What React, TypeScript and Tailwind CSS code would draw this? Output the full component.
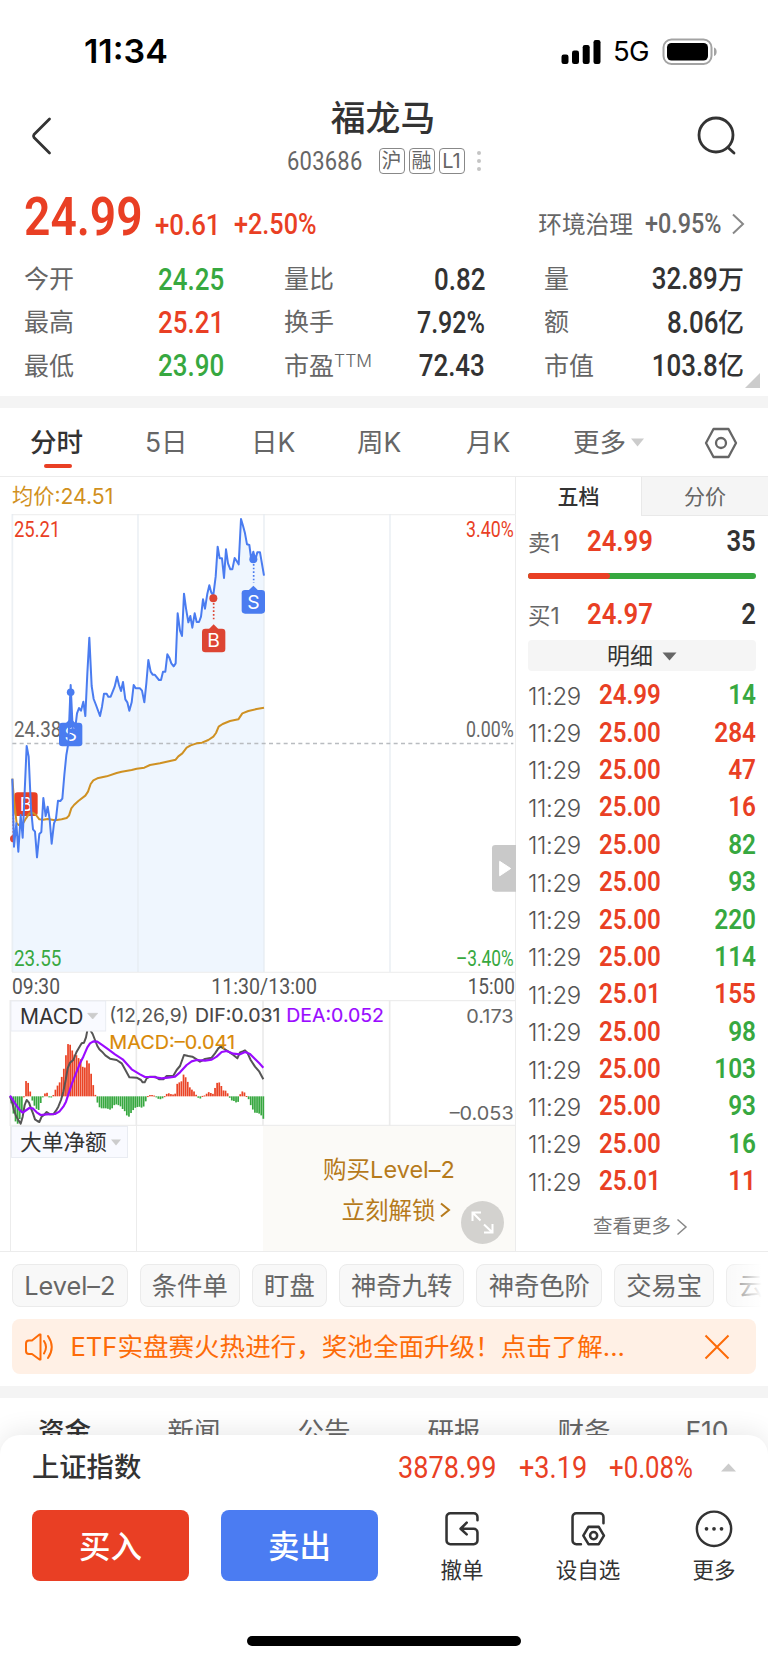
import React from "react";

const SANS = "font-['Inter','Noto_Sans_CJK_SC',sans-serif]";
const RED = "text-[#e93f24]";
const GREEN = "text-[#37a840]";

/** Condensed tabular figures used for every quote value. */
function Num({ children, className = "scale-x-[.86]", right = false }: { children: React.ReactNode; className?: string; right?: boolean }) {
  return (
    <span
      className={`inline-block whitespace-nowrap leading-none font-['Roboto','Noto_Sans_CJK_SC',sans-serif] ${
        right ? "origin-right" : "origin-left"
      } ${className}`}
    >
      {children}
    </span>
  );
}

const PRICE =
  "37,896 42,1100 49,1030 55,1115 62,1005 68,1073 80,798 86,830 93,985 99,1048 105,1055 111,1132 118,1062 124,1056 130,954 137,1008 143,980 149,1018 155,1091 162,1030 168,1015 174,962 181,963 187,956 193,885 199,825 205,790 212,615 218,745 224,760 231,700 237,684 243,692 250,665 256,708 262,580 268,473 275,618 281,657 288,675 300,708 306,680 312,641 320,641 325,650 332,650 344,620 351,590 357,615 363,633 369,606 376,658 382,667 388,692 395,667 401,615 407,625 420,625 426,632 433,667 439,610 445,540 452,575 458,584 464,584 477,600 483,600 489,575 496,575 502,523 508,533 514,550 521,559 527,550 533,400 540,452 546,468 552,341 558,385 565,427 571,408 577,443 584,400 590,426 597,426 603,410 609,358 615,386 622,341 628,316 634,338 640,345 647,290 653,200 659,235 666,235 672,294 678,208 684,250 691,268 697,268 704,234 710,243 716,253 723,117 729,137 735,160 741,193 748,195 754,240 760,215 766,240 772,217 780,217 792,287";
const AVERAGE =
  "37,896 42,960 50,1030 56,1035 68,1032 78,1015 88,1000 98,998 108,1005 118,1018 130,1019 143,1017 165,1021 185,1018 200,1014 207,1007 214,985 222,975 235,963 256,947 264,935 272,912 280,901 292,895 320,889 350,879 365,875 395,870 410,866 433,863 450,855 480,850 500,845 527,839 535,829 547,820 560,803 572,796 590,790 606,788 625,780 640,770 648,759 656,740 668,732 690,723 715,718 727,700 745,693 770,687 792,683";
const DIF =
  "30,409 36,425 42,450 48,468 55,480 62,491 68,470 74,435 80,420 87,428 93,445 99,460 105,478 112,483 118,486 125,470 132,465 140,456 150,463 160,463 168,452 175,440 183,420 190,395 197,360 203,325 210,308 220,300 230,275 240,258 245,250 252,248 258,232 263,206 270,209 278,222 285,240 292,258 298,268 306,275 316,286 330,296 350,300 365,310 375,328 388,352 410,353 423,360 428,367 434,367 440,355 450,350 465,350 478,358 490,358 500,348 520,347 530,330 540,318 552,285 565,288 577,290 590,298 600,305 615,297 635,293 645,280 655,265 662,260 675,268 690,278 700,285 712,295 720,277 728,274 735,271 742,278 752,300 765,320 778,335 790,358";
const DEA =
  "30,407 45,430 58,449 68,458 75,453 88,444 98,445 110,457 122,465 140,463 165,462 178,455 190,440 198,425 206,400 216,370 228,340 240,310 250,290 262,262 270,250 280,244 292,245 305,254 325,268 345,283 368,298 395,328 420,343 435,351 460,351 485,355 510,352 525,350 540,337 560,315 575,304 590,300 615,302 635,299 650,290 665,276 680,273 700,281 720,283 735,276 750,282 765,297 778,310 790,323";
const HIST: [number, number][] = [
  [34, 430], [38, 452], [50, 497], [56, 485], [62, 470], [68, 450], [74, 385], [80, 353], [87, 378], [93, 405], [99, 430], [105, 440], [112, 450], [118, 450], [124, 420], [130, 408], [137, 397], [143, 399], [149, 414], [155, 412], [162, 402], [168, 384], [175, 373], [181, 364], [187, 345], [193, 320], [200, 270], [206, 244], [212, 258], [219, 278], [225, 287], [231, 285], [237, 297], [244, 298], [250, 330], [256, 320], [263, 293], [269, 318], [276, 355], [282, 388], [288, 413], [295, 437], [301, 445], [320, 445], [333, 450], [345, 432], [357, 436], [363, 440], [370, 450], [376, 455], [382, 470], [388, 470], [395, 455], [407, 442], [420, 440], [428, 445], [436, 430], [440, 410], [450, 405], [460, 405], [470, 412], [478, 419], [490, 414], [497, 404], [504, 399], [515, 403], [525, 404], [529, 375], [536, 366], [543, 370], [549, 342], [556, 350], [562, 362], [568, 380], [574, 388], [580, 391], [587, 402], [593, 412], [600, 417], [606, 408], [615, 406], [625, 396], [640, 402], [649, 370], [656, 366], [662, 371], [668, 392], [675, 390], [683, 400], [690, 415], [697, 423], [705, 423], [713, 434], [717, 410], [725, 394], [732, 395], [738, 406], [745, 415], [752, 435], [763, 458], [775, 459], [783, 465], [791, 478],
];

function histAt(x: number) {
  for (let i = 1; i < HIST.length; i++) {
    if (x <= HIST[i][0]) {
      const [x0, y0] = HIST[i - 1];
      const [x1, y1] = HIST[i];
      return y0 + ((y1 - y0) * (x - x0)) / (x1 - x0);
    }
  }
  return HIST[HIST.length - 1][1];
}

function AxisText({ x, y, w, fill, children, end = false }: { x: number; y: number; w: number; fill: string; children: string; end?: boolean }) {
  return (
    <text x={x} y={y} textLength={w} lengthAdjust="spacingAndGlyphs" textAnchor={end ? "end" : "start"} fill={fill} fontSize="65" fontFamily="Roboto, sans-serif">
      {children}
    </text>
  );
}

function Flag({ x, y, letter, fill, pointer = true }: { x: number; y: number; letter: string; fill: string; pointer?: boolean }) {
  return (
    <g>
      {pointer && <path d={`M${x - 14} ${y + 1} L${x} ${y - 13} L${x + 14} ${y + 1}Z`} fill={fill} />}
      <rect x={x - 35} y={y} width="70" height="71" rx="10" fill={fill} />
      <text x={x} y={y + 56} textAnchor="middle" fill="#fff" fontSize="58" fontFamily="Inter, sans-serif">
        {letter}
      </text>
    </g>
  );
}

function PriceChart() {
  return (
    <svg className="block h-[486px] w-[516px]" viewBox="0 102 1548 1458">
      <polygon points={`37,1476 ${PRICE} 792,1476`} fill="#eff6fe" />
      <path d="M36 103.5H1548M36 1477H1548" stroke="#f0f0f0" strokeWidth="4" />
      <path d="M37 102V1476M414 102V1476M792 102V1476M1170 102V1476" stroke="#e6ebf0" strokeOpacity=".75" strokeWidth="5" />
      <path d="M37 790.5H1540" stroke="#b9bcc0" strokeWidth="4" strokeDasharray="12 10" />
      <AxisText x={42} y={172} w={139} fill="#e93f24">25.21</AxisText>
      <AxisText x={42} y={772} w={142} fill="#666">24.38</AxisText>
      <AxisText x={42} y={1458} w={142} fill="#37a840">23.55</AxisText>
      <AxisText x={1541} y={172} w={143} fill="#e93f24" end>3.40%</AxisText>
      <AxisText x={1541} y={772} w={143} fill="#666" end>0.00%</AxisText>
      <AxisText x={1541} y={1458} w={173} fill="#37a840" end>–3.40%</AxisText>
      <AxisText x={36} y={1543} w={144} fill="#555">09:30</AxisText>
      <AxisText x={634} y={1543} w={317} fill="#555">11:30/13:00</AxisText>
      <AxisText x={1545} y={1543} w={142} fill="#555" end>15:00</AxisText>
      <Flag x={78} y={937} letter="B" fill="#e93f24" pointer={false} />
      <Flag x={212} y={728} letter="S" fill="#4a7cf0" />
      <path d="M40 1003V1072" stroke="#dd4533" strokeWidth="5" strokeDasharray="5 5" />
      <path d="M41 1065a11 11 0 1 0 0 22Z" fill="#dd4533" />
      <polyline points={AVERAGE} fill="none" stroke="#cf9123" strokeWidth="6" strokeLinejoin="round" />
      <polyline points={PRICE} fill="none" stroke="#4a7cf0" strokeWidth="6" strokeLinejoin="round" />
      <circle cx="212" cy="637" r="11.5" fill="#4a7cf0" />
      <path d="M212 650V735" stroke="#4a7cf0" strokeWidth="8" />
      <path d="M212 740V792" stroke="#4a7cf0" strokeWidth="5" strokeDasharray="5 6" />
      <circle cx="640" cy="355" r="12" fill="#dd4533" />
      <path d="M641 369V424" stroke="#dd4533" strokeWidth="5" strokeDasharray="5 6" />
      <Flag x={641} y={446} letter="B" fill="#dd4533" />
      <circle cx="760" cy="238" r="12" fill="#4a7cf0" />
      <path d="M761 252V308" stroke="#4a7cf0" strokeWidth="5" strokeDasharray="5 6" />
      <Flag x={760} y={330} letter="S" fill="#4a7cf0" />
      <path d="M1548 1095h-62a10 10 0 0 0-10 10v120a10 10 0 0 0 10 10h62Z" fill="#c9c9c9" />
      <path d="M1499 1144l33 21.500-33 22Z" fill="#fff" stroke="#fff" strokeWidth="3" strokeLinejoin="round" />
    </svg>
  );
}

function MacdChart() {
  const bars = Array.from({ length: 121 }, (_, i) => 34 + i * 6.3);
  return (
    <svg className="block h-[126px] w-[516px]" viewBox="0 120 1548 378">
      <path d="M30 122H1548M30 496H1548" stroke="#ededed" strokeWidth="4" />
      <path d="M31 120V498M409 120V498M789 120V498M1169 120V498" stroke="#ebebeb" strokeWidth="5" />
      {bars.map((x) => {
        const y = histAt(x);
        const up = y < 409;
        return <rect key={x} x={x - 2.6} y={up ? y : 409} width="5.2" height={Math.max(3, Math.abs(y - 409))} fill={up ? "#ea4426" : "#37a840"} />;
      })}
      <polyline points={DIF} fill="none" stroke="#555" strokeWidth="6" strokeLinejoin="round" />
      <polyline points={DEA} fill="none" stroke="#9a0bff" strokeWidth="6.500" strokeLinejoin="round" />
      <g fontFamily="Inter, sans-serif" fontSize="58">
        <rect x="33" y="123" width="284" height="90" fill="#f9faff" stroke="#e9ecf2" strokeWidth="3" />
        <text x="60" y="192" fontSize="64" textLength="190" lengthAdjust="spacingAndGlyphs" fill="#333">MACD</text>
        <path d="M263 160h30l-15 17Z" fill="#ccc" stroke="#ccc" strokeWidth="2" />
        <text x="328" y="185" textLength="238" lengthAdjust="spacingAndGlyphs" fill="#555">(12,26,9)</text>
        <text x="585" y="185" textLength="256" lengthAdjust="spacingAndGlyphs" fill="#444" stroke="#444" strokeWidth=".5">DIF:0.031</text>
        <text x="859" y="185" textLength="293" lengthAdjust="spacingAndGlyphs" fill="#9a0bff" stroke="#9a0bff" strokeWidth=".5">DEA:0.052</text>
        <text x="328" y="267" textLength="377" lengthAdjust="spacingAndGlyphs" fill="#d98a08" stroke="#d98a08" strokeWidth=".5">MACD:–0.041</text>
        <text x="1541" y="189" textAnchor="end" textLength="142" lengthAdjust="spacingAndGlyphs" fill="#666">0.173</text>
        <text x="1541" y="479" textAnchor="end" textLength="192" lengthAdjust="spacingAndGlyphs" fill="#666">–0.053</text>
      </g>
    </svg>
  );
}

const STATS = [
  ["今开", "24.25", GREEN, "量比", "0.82", "量", "32.89万"],
  ["最高", "25.21", RED, "换手", "7.92%", "额", "8.06亿"],
  ["最低", "23.90", GREEN, "市盈", "72.43", "市值", "103.8亿"],
];

const TICKS: [string, string, string][] = [
  ["24.99", "14", GREEN],
  ["25.00", "284", RED],
  ["25.00", "47", RED],
  ["25.00", "16", RED],
  ["25.00", "82", GREEN],
  ["25.00", "93", GREEN],
  ["25.00", "220", GREEN],
  ["25.00", "114", GREEN],
  ["25.01", "155", RED],
  ["25.00", "98", GREEN],
  ["25.00", "103", GREEN],
  ["25.00", "93", GREEN],
  ["25.00", "16", GREEN],
  ["25.01", "11", RED],
];

function StatusBar() {
  return (
    <div className="flex h-[90px] shrink-0 items-center pt-[13px] pr-[51px] pl-[84px] text-black">
      <span className="origin-left scale-x-[1.03] text-[33px] leading-none font-semibold">11:34</span>
      <div className="ml-auto flex items-center">
        <svg width="40" height="26" viewBox="0 0 40 26">
          <rect x="0.500" y="15.500" width="7" height="9.500" rx="2.200" />
          <rect x="11" y="11.500" width="7" height="13.500" rx="2.200" />
          <rect x="21.700" y="6" width="7" height="19" rx="2.200" />
          <rect x="32.500" y="1" width="7" height="24" rx="2.200" />
        </svg>
        <span className="ml-[12px] w-[37px] origin-left pt-px text-[27.5px] leading-none tracking-[-.6px]">5G</span>
        <svg className="ml-[12px]" width="55" height="28" viewBox="0 0 55 28">
          <rect x="1.500" y="1.500" width="48" height="24.500" rx="8" fill="none" stroke="#a3a3a3" strokeWidth="2" />
          <rect x="5" y="5" width="41" height="17.500" rx="4.500" />
          <path d="M52 9.500c3.500 1 3.500 7.500 0 8.500Z" fill="#a3a3a3" />
        </svg>
      </div>
    </div>
  );
}

function Header() {
  return (
    <div className="grid h-[94px] shrink-0 grid-cols-[1fr_auto_1fr] items-start pr-[31px] pl-[30px]">
      <svg className="mt-[26px]" width="24" height="40" viewBox="0 0 24 40" fill="none" stroke="#333" strokeWidth="2.800" strokeLinecap="round" strokeLinejoin="round">
        <path d="M19.500 3L4 18.500Q3 20 4 21.500L19.500 37" />
      </svg>
      <div className="flex flex-col items-center">
        <div className="mt-[11px] mr-px text-[34.8px] leading-[34px] font-medium text-[#333]">福龙马</div>
        <div className="mt-[13px] flex h-[26px] items-center">
          <span className="w-[92px] text-[25.5px] leading-none text-[#666]"><Num className="scale-x-[.86] pt-px font-[450] tracking-[.3px]">603686</Num></span>
          <div className="flex gap-1 text-[#666]">
            {["沪", "融", "L1"].map((t) => (
              <span key={t} className="flex size-[26px] items-center justify-center rounded-[4px] border-[1.500px] border-[#888] text-[20px] leading-none">{t}</span>
            ))}
          </div>
          <span className="ml-[12px] flex flex-col gap-[4px]">
            <i className="size-1 rounded-full bg-[#c4c4c4]" />
            <i className="size-1 rounded-full bg-[#c4c4c4]" />
            <i className="size-1 rounded-full bg-[#c4c4c4]" />
          </span>
        </div>
      </div>
      <svg className="mt-[25px] justify-self-end" width="40" height="42" viewBox="0 0 40 42" fill="none" stroke="#333" strokeWidth="2.800" strokeLinecap="round">
        <circle cx="19" cy="20" r="17" />
        <path d="M31 32.500L37 38" />
      </svg>
    </div>
  );
}

function Quote() {
  return (
    <div className="relative h-[212px] shrink-0 text-[#333]">
      <div className="flex h-[64px] items-center pt-px">
        <span className="ml-[24px] w-[131px] text-[54px] leading-none"><Num className={`scale-x-[.855] font-semibold ${RED}`}>24.99</Num></span>
        <div className={`flex w-full items-center pt-[15px] text-[30px] leading-none ${RED}`}>
          <span className="w-[79px]"><Num className="scale-x-[.86] font-medium">+0.61</Num></span>
          <Num className="scale-x-[.84] font-medium">+2.50%</Num>
          <span className="ml-auto pt-px text-[23.7px] text-[#666]">环境治理</span>
          <span className="ml-[12px] w-[80px] text-[28.5px] text-[#666]"><Num className="scale-x-[.82] font-medium">+0.95%</Num></span>
          <svg className="mr-[23px] ml-[6px] shrink-0" width="14" height="22" viewBox="0 0 14 22" fill="none" stroke="#888" strokeWidth="2"><path d="M2 1.500L12 11 2 20.500" /></svg>
        </div>
      </div>
      <div className="mt-[10px]">
        {STATS.map(([a, av, c, b, bv, d, dv]) => (
          <div key={a} className="flex h-[43.3px] items-center text-[30.5px] leading-none font-medium">
            <span className="ml-[24px] w-[134px] text-[25px] font-normal text-[#666]">{a}</span>
            <span className={`w-[126px] ${c}`}><Num className="scale-x-[.85]">{av}</Num></span>
            <span className="w-[100px] text-[25px] font-normal whitespace-nowrap text-[#666]">
              {b}
              {b === "市盈" && <sup className="relative -top-[8px] align-baseline text-[17.5px] font-light">TTM</sup>}
            </span>
            <span className="w-[101px] text-right"><Num right className={bv.endsWith("%") ? "scale-x-[.82]" : "scale-x-[.85]"}>{bv}</Num></span>
            <span className="ml-[59px] w-[80px] text-[25px] font-normal text-[#666]">{d}</span>
            <span className="flex w-[120px] items-center justify-end whitespace-nowrap">
              <Num right className="scale-x-[.85]">{dv.slice(0, -1)}</Num>
              <span className="text-[26px] leading-none">{dv.slice(-1)}</span>
            </span>
          </div>
        ))}
      </div>
      <svg className="absolute right-[8px] bottom-[8px]" width="15" height="15"><path d="M15 0V15H0Z" fill="#ccc" /></svg>
    </div>
  );
}

function PeriodTabs() {
  return (
    <div className="flex h-[69px] shrink-0 items-center border-b border-[#ececec] pt-px pl-[30px] text-[26.5px] leading-none text-[#666]">
      <span className="relative w-[115px] font-medium text-[#333]">
        分时
        <i className="absolute top-[35px] left-[14px] h-[4px] w-[28px] rounded-full bg-[#e93f24]" />
      </span>
      <span className="w-[106px]">5日</span>
      <span className="w-[106px]">日K</span>
      <span className="w-[109px]">周K</span>
      <span className="w-[107px]">月K</span>
      <span>更多</span>
      <svg className="ml-[4px]" width="15" height="9"><path d="M1 .5h13L7.500 8.500Z" fill="#ccc" /></svg>
      <svg className="ml-[59px]" width="34" height="32" viewBox="0 0 34 32" fill="none" stroke="#666" strokeWidth="2.300" strokeLinejoin="round">
        <path d="M9.500 2h15L32 16l-7.500 14h-15L2 16Z" />
        <circle cx="17" cy="16" r="5" />
      </svg>
    </div>
  );
}

function OrderBook() {
  return (
    <div className="flex w-[252px] flex-col">
      <div className="flex h-[39px] text-[21px] leading-none">
        <div className="flex w-[125px] items-center justify-center font-medium text-[#333]">五档</div>
        <div className="flex w-[127px] items-center justify-center border-b border-l border-[#e9e9e9] bg-[#f5f5f5] text-[#666]">分价</div>
      </div>
      <div className="flex flex-col px-[12px]">
        <div className="flex h-[50px] items-center pt-[2px] text-[29.5px] leading-none font-semibold">
          <span className="w-[59px] pt-[3px] text-[22.5px] font-normal text-[#666]">卖1</span>
          <Num className={`scale-x-[.87] ${RED}`}>24.99</Num>
          <Num right className="ml-auto scale-x-[.87] text-[#333]">35</Num>
        </div>
        <div className="mt-[7px] flex h-[6px] overflow-hidden rounded-full bg-[#37a840]"><i className="w-[82px] rounded-r-full bg-[#e93f24]" /></div>
        <div className="mt-[9px] flex h-[52px] items-center pt-[2px] text-[29.5px] leading-none font-semibold">
          <span className="w-[59px] pt-[3px] text-[22.5px] font-normal text-[#666]">买1</span>
          <Num className={`scale-x-[.87] ${RED}`}>24.97</Num>
          <Num right className="ml-auto scale-x-[.87] text-[#333]">2</Num>
        </div>
        <div className="flex h-[31px] items-center justify-center rounded-[4px] bg-[#f5f5f5] pt-px text-[23px] leading-none text-[#333]">
          明细
          <svg className="ml-[9px]" width="15" height="9"><path d="M.5.5h14L7.500 8.500Z" fill="#666" /></svg>
        </div>
        <div className="mt-[5.5px] flex flex-col">
          {TICKS.map(([price, vol, color], i) => (
            <div key={i} className="flex h-[37.4px] items-center text-[28px] leading-none">
              <span className="w-[71px] pt-[3px] text-[24px] font-light tracking-[-.4px] text-[#555]">11:29</span>
              <Num className={`scale-x-[.86] font-semibold ${RED}`}>{price}</Num>
              <Num right className={`ml-auto scale-x-[.87] font-semibold ${color}`}>{vol}</Num>
            </div>
          ))}
        </div>
        <div className="mt-[15px] flex h-[24px] items-center justify-center pr-[3px] text-[19.5px] leading-none text-[#777]">
          查看更多
          <svg className="ml-[5px]" width="12" height="18" fill="none" stroke="#888" strokeWidth="1.500"><path d="M1.500 1.500L10 9 1.500 16.500" /></svg>
        </div>
      </div>
    </div>
  );
}

function Charts() {
  return (
    <div className="flex h-[775px] shrink-0 border-b border-[#ececec]">
      <div className="flex w-[516px] flex-col border-r border-[#ececec]">
        <div className="flex h-[37px] items-center pt-[2px] pl-[12px] text-[21.2px] leading-none text-[#d1901d]">均价:24.51</div>
        <PriceChart />
        <MacdChart />
        <div className="ml-[10px] flex h-[125px] border-l border-[#ececec]">
          <div className="w-[126px] border-r border-[#ececec]">
            <div className="flex h-[32px] w-[117px] items-center border border-[#e9ecf2] bg-[#f9faff] pt-px pl-[8px] text-[21.7px] leading-none whitespace-nowrap text-[#333]">
              大单净额
              <svg className="ml-[4px] shrink-0" width="10" height="7"><path d="M0 .5h10L5 6.500Z" fill="#ccc" /></svg>
            </div>
          </div>
          <div className="w-[126px]" />
          <div className="relative flex flex-1 flex-col items-center bg-[#fbfaf7] text-[23.5px] leading-none text-[#b67a1c]">
            <div className="mt-[32px]">购买Level–2</div>
            <div className="mt-[17px] ml-[14px] flex items-center">
              立刻解锁
              <svg className="ml-[3px]" width="12" height="18" fill="none" stroke="#b67a1c" strokeWidth="2"><path d="M2 2.500L10 9 2 15.500" /></svg>
            </div>
            <svg className="absolute right-[11px] bottom-[7px]" width="43" height="43" viewBox="0 0 43 43" fill="none" stroke="#fff" strokeWidth="2">
              <circle cx="21.500" cy="21.500" r="21.500" fill="#d3d2cf" stroke="none" />
              <path d="M11.500 20V11.500H20M11.500 11.500l8 8M23 23.500l8.500 8M31.500 23v8.500H23" />
            </svg>
          </div>
        </div>
      </div>
      <OrderBook />
    </div>
  );
}

function Shortcuts() {
  return (
    <div className="relative flex h-[67px] shrink-0 gap-[12px] overflow-hidden pt-[12px] pl-[12px]">
      {["Level–2", "条件单", "盯盘", "神奇九转", "神奇色阶", "交易宝", "云参数"].map((t) => (
        <span key={t} className="flex h-[43px] shrink-0 items-center rounded-[8px] border border-[#ebebeb] bg-[#f8f8f8] px-[11.2px] pt-px text-[25.3px] leading-none text-[#666]">{t}</span>
      ))}
      <i className="absolute top-0 right-0 h-full w-[42px] bg-gradient-to-r from-white/10 to-white to-85%" />
    </div>
  );
}

function Notice() {
  return (
    <div className="mx-[12px] flex h-[55px] shrink-0 items-center rounded-[8px] bg-[#fff0e5] text-[25.55px] leading-none text-[#fd6b08]">
      <svg className="ml-[13px]" width="30" height="30" viewBox="0 0 30 30" fill="none" stroke="#fd6b08" strokeWidth="2" strokeLinejoin="round" strokeLinecap="round">
        <path d="M4 8.500h3l7.500-6h1v25h-1L7 22H4q-3 0-3-3v-7.500q0-3 3-3Z" />
        <path d="M19 9q4 6 0 12.500M23 4q7.500 11 0 22" />
      </svg>
      <span className="ml-[15.500px] pt-px whitespace-nowrap">ETF实盘赛火热进行，奖池全面升级！点击了解...</span>
      <svg className="mr-[26px] ml-auto" width="26" height="26" fill="none" stroke="#fd6b08" strokeWidth="2"><path d="M1.500 1.500l23 23M24.500 1.500l-23 23" /></svg>
    </div>
  );
}

function BottomSheet() {
  return (
    <div className="absolute inset-x-0 bottom-0 flex h-[228px] flex-col rounded-t-[20px] bg-white shadow-[0_-3px_26px_rgba(0,0,0,0.09)]">
      <div className="flex h-[64px] items-center pt-px pl-[32px] text-[27.3px] leading-none font-medium text-[#333]">
        <span className="pt-px">上证指数</span>
        <div className={`ml-auto flex text-[31.5px] font-normal ${RED}`}>
          <span className="w-[121px]"><Num>3878.99</Num></span>
          <span className="w-[90px]"><Num>+3.19</Num></span>
          <span className="w-[112px]"><Num className="scale-x-[.82]">+0.08%</Num></span>
        </div>
        <svg className="mr-[32px]" width="15" height="9"><path d="M0 8.500h15L7.500.5Z" fill="#ccc" /></svg>
      </div>
      <div className="mt-[11px] flex h-[71px] text-[21.5px] leading-none text-[#333]">
        <button className="ml-[32px] w-[157px] rounded-[8px] bg-[#e93f24] pt-[2px] text-[31.5px] font-medium text-white">买入</button>
        <button className="ml-[32px] w-[157px] rounded-[8px] bg-[#4b7cf2] pt-[2px] text-[31.5px] font-medium text-white">卖出</button>
        <div className="ml-[32px] flex w-[104px] flex-col items-center">
          <svg width="40" height="40" viewBox="0 0 40 40" fill="none" stroke="#333" strokeWidth="2.700" strokeLinecap="round" strokeLinejoin="round">
            <path d="M36.500 11V7.500a4 4 0 0 0-4-4H7.500a4 4 0 0 0-4 4V32.500a4 4 0 0 0 4 4H32.500a4 4 0 0 0 4-4V24a4 4 0 0 0-4-4H19M25 13.500L18.500 20 25 26" />
          </svg>
          <span className="mt-[12px]">撤单</span>
        </div>
        <div className="ml-[22px] flex w-[104px] flex-col items-center">
          <svg width="40" height="40" viewBox="0 0 40 40" fill="none" stroke="#333" strokeWidth="2.700" strokeLinecap="round" strokeLinejoin="round">
            <path d="M36.500 14V7.500a4 4 0 0 0-4-4H7.500a4 4 0 0 0-4 4V32.500a4 4 0 0 0 4 4h5" />
            <path d="M20.500 18h11L37 27.300l-5.500 9.200h-11L15 27.300Z" />
            <circle cx="26" cy="27.300" r="3.800" />
          </svg>
          <span className="mt-[12px]">设自选</span>
        </div>
        <div className="ml-[22px] flex w-[104px] shrink-0 flex-col items-center">
          <svg width="40" height="40" viewBox="0 0 40 40" fill="none" stroke="#333" strokeWidth="2.600">
            <circle cx="20" cy="20" r="18.300" />
            <path d="M12 20h.01M20 20h.01M28 20h.01" strokeWidth="4" strokeLinecap="round" />
          </svg>
          <span className="mt-[12px]">更多</span>
        </div>
      </div>
      <div className="mt-[55px] ml-[247px] h-[10px] w-[274px] rounded-full bg-black" />
    </div>
  );
}

export default function App() {
  return (
    <div className={`relative flex h-[1663px] w-[768px] flex-col overflow-hidden bg-white ${SANS}`}>
      <StatusBar />
      <Header />
      <Quote />
      <div className="h-[12px] shrink-0 bg-[#f4f4f4]" />
      <PeriodTabs />
      <Charts />
      <Shortcuts />
      <Notice />
      <div className="mt-[12px] h-[12px] shrink-0 bg-[#f4f4f4]" />
      <div className="flex shrink-0 items-center pt-[20px] text-[26.5px] leading-none text-[#666]">
        <span className="w-[129px] text-center font-medium text-[#333]">资金</span>
        <span className="w-[130px] text-center">新闻</span>
        <span className="w-[130px] text-center">公告</span>
        <span className="w-[130px] text-center">研报</span>
        <span className="w-[130px] text-center">财务</span>
        <span className="w-[116px] text-center">F10</span>
      </div>
      <BottomSheet />
    </div>
  );
}
